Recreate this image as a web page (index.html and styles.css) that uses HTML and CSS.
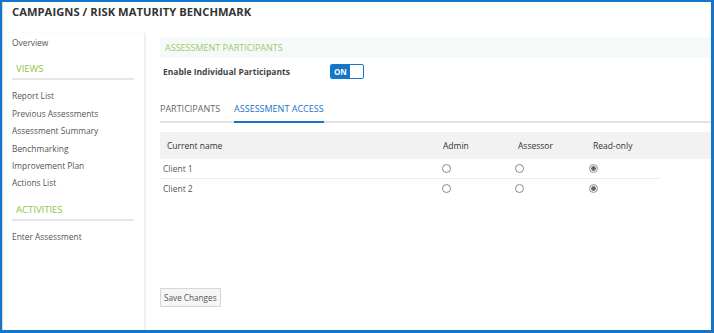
FILE: index.html
```html
<!DOCTYPE html>
<html>
<head>
<meta charset="utf-8">
<link rel="stylesheet" href="styles.css">
</head>
<body>
<div class="frame">
  <div class="header"><h1 class="title">CAMPAIGNS / RISK MATURITY BENCHMARK</h1></div>
  <div class="main">
    <aside class="sidebar">
      <a class="nav-item first">Overview</a>
      <div class="section">VIEWS</div>
      <a class="nav-item">Report List</a>
      <a class="nav-item">Previous Assessments</a>
      <a class="nav-item">Assessment Summary</a>
      <a class="nav-item">Benchmarking</a>
      <a class="nav-item">Improvement Plan</a>
      <a class="nav-item">Actions List</a>
      <div class="section">ACTIVITIES</div>
      <a class="nav-item">Enter Assessment</a>
    </aside>
    <section class="content">
      <div class="panel-head">ASSESSMENT PARTICIPANTS</div>
      <div class="enable-row">
        <span class="enable-label">Enable Individual Participants</span>
        <span class="toggle"><span class="toggle-on">ON</span><span class="toggle-knob"></span></span>
      </div>
      <div class="tabs">
        <span class="tab">PARTICIPANTS</span>
        <span class="tab active">ASSESSMENT ACCESS</span>
      </div>
      <div class="table">
        <div class="thead">
          <span class="c-name">Current name</span>
          <span class="c-opt">Admin</span>
          <span class="c-opt">Assessor</span>
          <span class="c-opt">Read-only</span>
        </div>
        <div class="row">
          <span class="c-name">Client 1</span>
          <span class="c-opt"><span class="radio"></span></span>
          <span class="c-opt"><span class="radio"></span></span>
          <span class="c-opt"><span class="radio checked"></span></span>
        </div>
        <div class="row last">
          <span class="c-name">Client 2</span>
          <span class="c-opt"><span class="radio"></span></span>
          <span class="c-opt"><span class="radio"></span></span>
          <span class="c-opt"><span class="radio checked"></span></span>
        </div>
      </div>
      <div class="spacer"></div>
      <button class="save">Save Changes</button>
    </section>
  </div>
</div>
</body>
</html>
```
FILE: styles.css
```css
html, body { margin: 0; padding: 0; background: #fff; }
body { font-family: "Open Sans", "Liberation Sans", sans-serif; color: #555; }
.frame {
  width: 714px; height: 333px; box-sizing: border-box;
  border: 2px solid #1475c9; border-right-width: 3px; border-bottom-width: 3px;
  display: flex; flex-direction: column; overflow: hidden;
}
.header { height: 31px; padding: 2px 0 0 10px; box-sizing: border-box; box-shadow: inset 1px 0 0 #d8d8d8; }
.title { margin: 0; font-size: 11.2px; line-height: 16px; font-weight: 700; color: #333; letter-spacing: 0.05px; font-family: "Open Sans", sans-serif; }
.main { flex: 1; display: flex; }
.sidebar {
  width: 143px; border-right: 1px solid #ececec; box-shadow: 1px 0 2px #f2f2f2, inset 1px 0 0 #d8d8d8;
  padding: 1px 10px 0 10px; box-sizing: border-box; display: flex; flex-direction: column;
}
.nav-item { font-size: 8.4px; color: #555; height: 17.4px; line-height: 17.4px; }
.section {
  font-size: 9.5px; color: #8cc63e; padding-left: 4px; height: 18px; line-height: 18px;
  margin-top: 9px; border-bottom: 2px solid #e6e6e6; margin-bottom: 7px;
}
.content { flex: 1; padding: 4px 0 0 15px; display: flex; flex-direction: column; }
.panel-head {
  background: #f5f9fa; height: 21px; line-height: 21px; padding-left: 5px;
  font-size: 9px; color: #9acd62;
}
.enable-row { display: flex; align-items: center; height: 26px; padding-left: 3px; }
.enable-label { font-size: 8.5px; font-weight: 700; color: #444; width: 167px; }
.toggle {
  display: flex; width: 34px; height: 15px; box-sizing: border-box;
  border: 1px solid #1475c9; border-radius: 2px; overflow: hidden;
}
.toggle-on { background: #1475c9; color: #fff; font-size: 8px; font-weight: 700; width: 19px; display: flex; align-items: center; padding-left: 3px; box-sizing: border-box; }
.toggle-knob { flex: 1; background: #fff; border-radius: 2px; }
.tabs { margin-top: 15px; display: flex; border-bottom: 2px solid #e2e2e2; height: 22px; align-items: stretch; }
.tab { font-size: 9px; color: #666; line-height: 19px; margin-right: 14px; }
.tab.active { color: #1475c9; border-bottom: 2px solid #1475c9; margin-bottom: -2px; }
.table { margin-top: 9px; }
.thead { display: flex; align-items: center; background: #f2f2f2; height: 27px; font-size: 8.5px; color: #333; }
.c-name { width: 283px; padding-left: 7px; box-sizing: border-box; }
.c-opt { width: 75px; }
.row { display: flex; align-items: center; height: 19px; font-size: 8.5px; color: #555; width: 500px; border-bottom: 1px solid #ececec; }
.row .c-name { padding-left: 3px; }
.row .c-opt { display: flex; }
.row.last { border-bottom: none; }
.radio { width: 7px; height: 7px; border: 1px solid #888; border-radius: 50%; margin-left: 3px; box-sizing: content-box; }
.radio.checked { background: radial-gradient(circle, #666 0 2px, #eee 2.5px); border-color: #999; }
.spacer { height: 90px; }
.save {
  align-self: flex-start; font-family: "Open Sans", sans-serif; font-size: 8.2px; color: #555;
  background: #f6f6f6; border: 1px solid #d6d6d6; padding: 0 3px; height: 19px; border-radius: 1px;
}
```
